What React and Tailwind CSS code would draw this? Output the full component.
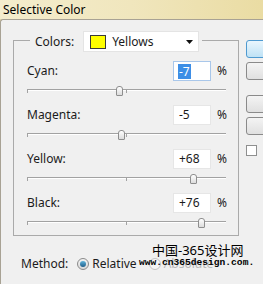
import React from "react";

const channels = [
  { label: "Cyan:", value: "-7", pos: 92, focused: true },
  { label: "Magenta:", value: "-5", pos: 94 },
  { label: "Yellow:", value: "+68", pos: 166 },
  { label: "Black:", value: "+76", pos: 174 },
];

const Channel = ({ label, value, pos, focused }) => (
  <div className="flex flex-col">
    <div className="flex h-[20px] items-center pl-[13px]">
      <span className="w-[146px] text-[12px] text-[#1b1b1b]">{label}</span>
      <div
        className={`flex h-[20px] w-[38px] items-center border bg-white pl-[4px] text-[12px] text-[#1b1b1b] ${
          focused ? "border-[#a9c7ea]" : "border-[#e6e6e6]"
        }`}
      >
        {focused ? (
          <span className="bg-[#3d8ee6] px-[1px] leading-[15px] text-white">{value}</span>
        ) : (
          <span className="pl-[1px]">{value}</span>
        )}
      </div>
      <span className="ml-[6px] text-[12px] text-[#1b1b1b]">%</span>
    </div>
    {/* slider */}
    <div className="relative ml-[13px] h-[24px] w-[199px]">
      <div className="absolute left-0 top-[8px] h-[2px] w-full border-t border-[#a2a2a2] bg-white" />
      <div className="absolute left-0 top-[8px] h-[4px] w-px bg-[#a2a2a2]" />
      <div className="absolute left-[99px] top-[8px] h-[4px] w-px bg-[#a2a2a2]" />
      <div
        className="absolute top-[5px] h-[10px] w-[7px] rounded-t-[3px] rounded-b-[1px] border border-[#8e8e8e] bg-gradient-to-b from-white to-[#dcdcdc]"
        style={{ left: pos - 3 }}
      />
    </div>
  </div>
);

export default function App() {
  return (
    <div className="relative flex h-[284px] w-[263px] flex-col overflow-hidden bg-[#ecdfaa] font-['Noto_Sans',sans-serif]">
      {/* Title bar */}
      <div className="flex h-[19px] items-center bg-gradient-to-r from-[#f4edcd] via-[#f0e6bd] to-[#eadca3] pl-[3px] text-[12px] text-black">
        Selective Color
      </div>

      <div className="flex flex-1">
        <div className="w-[3px] bg-gradient-to-b from-[#eadca6] to-[#e3d39b]" />
        <div className="flex flex-1 rounded-tl-[3px] border-l border-t border-[#a8a294] bg-[#f0f0f0]">
          {/* Main column */}
          <div className="flex w-[245px] flex-col">
            <div className="ml-[12px] mt-[20px] flex h-[196px] w-[226px] flex-col border border-[#aaaaaa]">
              {/* Colors header on the border */}
              <div className="-mt-[10px] ml-[16px] flex h-[21px] w-[172px] items-center bg-[#f0f0f0] pl-[5px]">
                <span className="text-[12px] text-[#1b1b1b]">Colors:</span>
                <div className="ml-[9px] flex h-[21px] w-[116px] items-center border border-[#e4e4e4] bg-white">
                  <div className="ml-[6px] h-[14px] w-[16px] border border-[#3a3a3a] bg-[#ffff00]" />
                  <span className="ml-[6px] text-[12px] text-[#1b1b1b]">Yellows</span>
                  <svg className="ml-auto mr-[5px]" width="7" height="4" viewBox="0 0 7 4">
                    <path d="M0 0h7L3.5 4z" fill="#111" />
                  </svg>
                </div>
              </div>

              <div className="mt-[9px] flex flex-col">
                {channels.map((c) => (
                  <Channel key={c.label} {...c} />
                ))}
              </div>
            </div>

            {/* Method */}
            <div className="ml-[20px] mt-[19px] flex h-[18px] items-center text-[12px] text-[#1b1b1b]">
              <span>Method:</span>
              <div className="ml-[9px] flex h-[12px] w-[12px] items-center justify-center rounded-full border border-[#8a8a8a] bg-gradient-to-b from-[#f4f4f4] to-[#d8d8d8]">
                <div className="h-[6px] w-[6px] rounded-full bg-gradient-to-b from-[#5fb4dc] to-[#1f5f8a]" />
              </div>
              <span className="ml-[3px]">Relative</span>
              <div className="ml-[12px] h-[12px] w-[12px] rounded-full border border-[#c4c4c4] bg-[#f6f6f6]" />
              <span className="ml-[3px] text-[#b8b8b8]">Absolute</span>
            </div>
          </div>

          {/* Buttons column (cut off at right edge) */}
          <div className="flex flex-1 flex-col pt-[20px]">
            <div className="h-[18px] w-[30px] rounded-[3px] border border-[#4f9ad0] bg-gradient-to-b from-[#eaf6fd] to-[#bfe2f5]" />
            <div className="mt-[4px] h-[18px] w-[30px] rounded-[3px] border border-[#8a8a8a] bg-gradient-to-b from-[#f4f4f4] to-[#e0e0e0]" />
            <div className="mt-[15px] h-[18px] w-[30px] rounded-[3px] border border-[#8a8a8a] bg-gradient-to-b from-[#f4f4f4] to-[#e0e0e0]" />
            <div className="mt-[4px] h-[18px] w-[30px] rounded-[3px] border border-[#8a8a8a] bg-gradient-to-b from-[#f4f4f4] to-[#e0e0e0]" />
            <div className="mt-[10px] h-[11px] w-[11px] border border-[#8e8f8f] bg-white" />
          </div>
        </div>
      </div>

      {/* Watermark overlay */}
      <div className="absolute left-[152px] top-[242px] text-[13px] leading-[16px] text-black font-['Noto_Sans','Noto_Sans_CJK_SC',sans-serif]">
        中国-365设计网
      </div>
      <div className="absolute left-[139px] top-[257px] text-[9.6px] font-bold leading-[12px] text-black font-['Liberation_Mono',monospace]">
        www.cn365design.com.
      </div>
    </div>
  );
}
